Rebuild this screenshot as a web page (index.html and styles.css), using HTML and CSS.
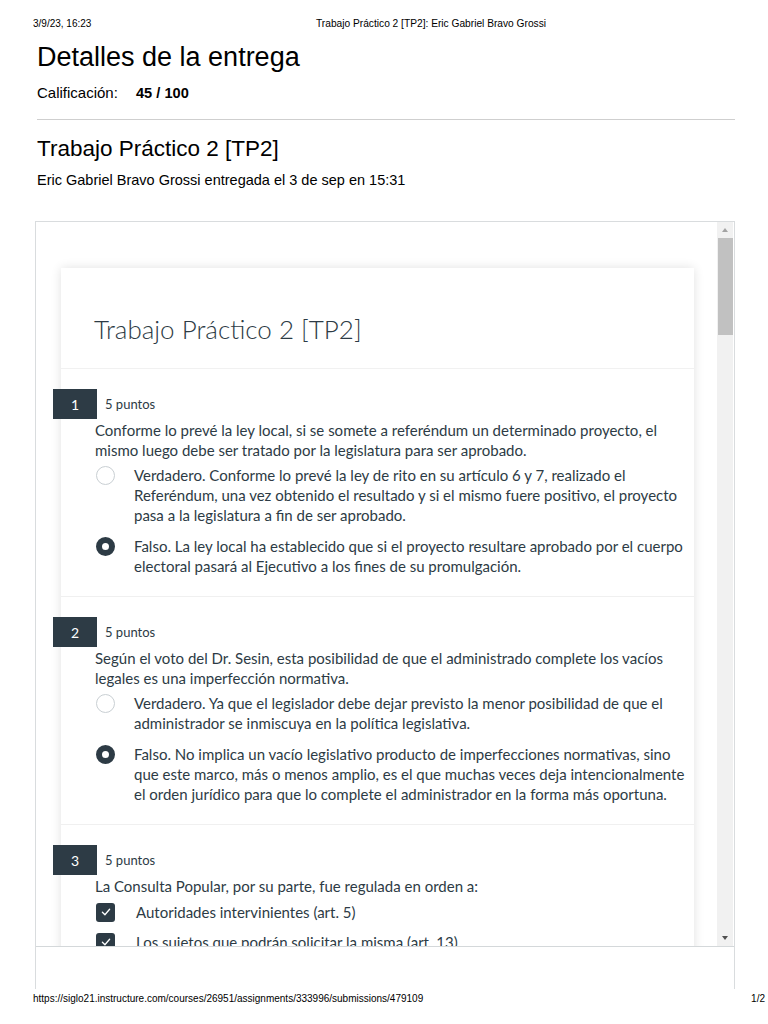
FILE: index.html
```html
<!DOCTYPE html>
<html lang="es">
<head>
<meta charset="utf-8">
<title>Trabajo Práctico 2 [TP2]: Eric Gabriel Bravo Grossi</title>
<link rel="stylesheet" href="styles.css">
</head>
<body>
<header class="print-head">
  <span class="print-date">3/9/23, 16:23</span>
  <span class="print-title">Trabajo Práctico 2 [TP2]: Eric Gabriel Bravo Grossi</span>
</header>

<main class="page">
  <h1 class="page-title">Detalles de la entrega</h1>
  <div class="grade"><span class="grade-label">Calificación:</span><strong class="grade-value">45 / 100</strong></div>
  <hr class="rule">
  <h2 class="assign-title">Trabajo Práctico 2 [TP2]</h2>
  <p class="submitted">Eric Gabriel Bravo Grossi entregada el 3 de sep en 15:31</p>

  <div class="frame">
    <div class="viewport">
      <div class="scroll-content">
        <section class="card">
          <div class="card-head">Trabajo Práctico 2 [TP2]</div>

          <div class="question">
            <div class="q-head"><span class="q-num">1</span><span class="q-pts">5 puntos</span></div>
            <p class="q-text">Conforme lo prevé la ley local, si se somete a referéndum un determinado proyecto, el mismo luego debe ser tratado por la legislatura para ser aprobado.</p>
            <div class="answer"><span class="radio"></span><span class="a-text">Verdadero. Conforme lo prevé la ley de rito en su artículo 6 y 7, realizado el Referéndum, una vez obtenido el resultado y si el mismo fuere positivo, el proyecto pasa a la legislatura a fin de ser aprobado.</span></div>
            <div class="answer"><span class="radio selected"></span><span class="a-text">Falso. La ley local ha establecido que si el proyecto resultare aprobado por el cuerpo electoral pasará al Ejecutivo a los fines de su promulgación.</span></div>
          </div>

          <div class="question">
            <div class="q-head"><span class="q-num">2</span><span class="q-pts">5 puntos</span></div>
            <p class="q-text">Según el voto del Dr. Sesin, esta posibilidad de que el administrado complete los vacíos legales es una imperfección normativa.</p>
            <div class="answer"><span class="radio"></span><span class="a-text">Verdadero. Ya que el legislador debe dejar previsto la menor posibilidad de que el administrador se inmiscuya en la política legislativa.</span></div>
            <div class="answer"><span class="radio selected"></span><span class="a-text">Falso. No implica un vacío legislativo producto de imperfecciones normativas, sino que este marco, más o menos amplio, es el que muchas veces deja intencionalmente el orden jurídico para que lo complete el administrador en la forma más oportuna.</span></div>
          </div>

          <div class="question">
            <div class="q-head"><span class="q-num">3</span><span class="q-pts">5 puntos</span></div>
            <p class="q-text">La Consulta Popular, por su parte, fue regulada en orden a:</p>
            <div class="check-item"><span class="check"><svg viewBox="0 0 20 20" width="12" height="12"><path d="M4 10.5 L8.2 14.5 L16 5.5" fill="none" stroke="#fff" stroke-width="2.2" stroke-linecap="round" stroke-linejoin="round"/></svg></span><span class="c-text">Autoridades intervinientes (art. 5)</span></div>
            <div class="check-item"><span class="check"><svg viewBox="0 0 20 20" width="12" height="12"><path d="M4 10.5 L8.2 14.5 L16 5.5" fill="none" stroke="#fff" stroke-width="2.2" stroke-linecap="round" stroke-linejoin="round"/></svg></span><span class="c-text">Los sujetos que podrán solicitar la misma (art. 13)</span></div>
          </div>
        </section>
      </div>
      <div class="scrollbar">
        <span class="arrow up"></span>
        <span class="thumb"></span>
        <span class="track-fill"></span>
        <span class="arrow down"></span>
      </div>
    </div>
    <div class="frame-rest"></div>
  </div>
</main>

<footer class="print-foot">
  <span>https://siglo21.instructure.com/courses/26951/assignments/333996/submissions/479109</span>
  <span>1/2</span>
</footer>
</body>
</html>
```

FILE: styles.css
```css
* { box-sizing: border-box; }
html, body { margin: 0; padding: 0; background: #fff; }
body {
  width: 768px;
  height: 1024px;
  overflow: hidden;
  font-family: "Liberation Sans", Arial, sans-serif;
  color: #000;
}

.print-head {
  display: flex;
  padding: 18px 0 0 33px;
  font-size: 10px;
  line-height: 12px;
  height: 30px;
}
.print-date { width: 283px; }
.print-title { font-size: 10.2px; }

.page { padding: 0 33px 0 35px; }

.page-title {
  margin: 10px 0 0 2px;
  font-size: 27px;
  font-weight: normal;
  line-height: 34px;
}
.grade {
  margin: 9px 0 0 2px;
  font-size: 15px;
  line-height: 20px;
  display: flex;
  align-items: baseline;
}
.grade-label { width: 99px; }
.grade-value { font-weight: bold; font-size: 14.6px; }

.rule {
  border: 0;
  border-top: 1px solid #cfcfcf;
  margin: 16px 0 0 2px;
}

.assign-title {
  margin: 15px 0 0 2px;
  font-size: 22.5px;
  font-weight: normal;
  line-height: 28px;
}
.submitted {
  margin: 7px 0 0 2px;
  font-size: 14.5px;
  line-height: 20px;
}

.frame {
  margin-top: 31px;
  border: 1px solid #d9dcde;
  border-bottom: 0;
  height: 768px;
  display: flex;
  flex-direction: column;
}
.viewport {
  display: flex;
  height: 725px;
  border-bottom: 1px solid #d4d8da;
}
.frame-rest { flex: 1; }

.scroll-content {
  flex: 1;
  overflow: hidden;
  padding: 46px 23px 0 25px;
}

.card {
  background: #fff;
  box-shadow: 0 0 10px rgba(0,0,0,0.12);
  font-family: Lato, "Open Sans", sans-serif;
  color: #2d3b45;
}
.card-head {
  height: 101px;
  padding: 45px 0 0 33px;
  font-size: 26px;
  font-weight: 300;
  line-height: 32px;
  color: #2d3b45;
  border-bottom: 1px solid #f1f1f1;
}

.question {
  padding: 20px 8px 20px 34px;
  border-bottom: 1px solid #f0f0f0;
}
.q-head {
  display: flex;
  align-items: center;
  margin-left: -42px;
  height: 30px;
}
.q-num {
  width: 44px;
  height: 30px;
  background: #2d3b45;
  color: #fff;
  font-size: 14px;
  display: flex;
  align-items: center;
  justify-content: center;
}
.q-pts {
  margin-left: 8px;
  font-size: 13px;
  color: #2d3b45;
}
.q-text {
  margin: 1px 0 0 0;
  font-size: 15px;
  line-height: 20px;
}

.answer {
  display: flex;
  align-items: flex-start;
  margin-top: 5px;
}
.answer + .answer { margin-top: 11px; }
.radio {
  flex: none;
  width: 19px;
  height: 19px;
  margin: 1px 19px 0 1px;
  border: 1.5px solid #c9cfd3;
  border-radius: 50%;
  background: #fff;
}
.radio.selected {
  border: 6px solid #2d3b45;
}
.a-text {
  font-size: 15px;
  line-height: 20px;
}

.check-item {
  display: flex;
  align-items: center;
  margin-top: 6px;
}
.check-item + .check-item { margin-top: 10px; }
.check {
  flex: none;
  width: 19px;
  height: 19px;
  margin: 0 21px 0 1px;
  border-radius: 3px;
  background: #2d3b45;
  display: flex;
  align-items: center;
  justify-content: center;
}
.c-text {
  font-size: 15px;
  line-height: 20px;
}

.scrollbar {
  flex: none;
  width: 16px;
  margin-right: 1px;
  background: #f1f1f1;
  display: flex;
  flex-direction: column;
  align-items: center;
}
.arrow {
  width: 0;
  height: 0;
  border-left: 3.5px solid transparent;
  border-right: 3.5px solid transparent;
  margin: 6px 0;
}
.arrow.up { border-bottom: 4px solid #a3a3a3; margin-top: 6px; }
.arrow.down { border-top: 4px solid #505050; }
.thumb {
  width: 15px;
  height: 97px;
  background: #c1c1c1;
}
.track-fill { flex: 1; }

.print-foot {
  display: flex;
  justify-content: space-between;
  padding: 0 3px 0 33px;
  margin-top: 4px;
  font-size: 10px;
  line-height: 12px;
}
```
